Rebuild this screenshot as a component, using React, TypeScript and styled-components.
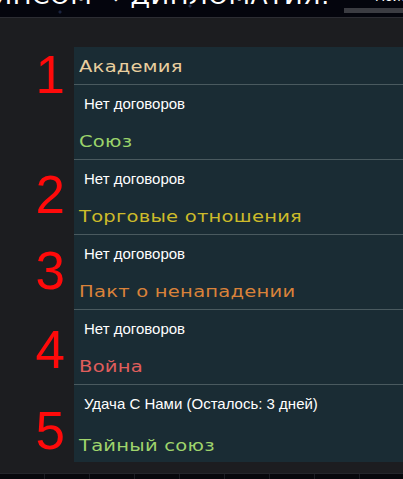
import React from "react";
import styled, { createGlobalStyle } from "styled-components";

const Global = createGlobalStyle`
  html, body { margin: 0; padding: 0; background: #1c1d20; }
  body { width: 403px; height: 479px; overflow: hidden; }
  * { box-sizing: border-box; }
`;

const Page = styled.div`
  width: 403px;
  height: 479px;
  display: flex;
  flex-direction: column;
  overflow: hidden;
  background: #1c1d20;
`;

const TopBar = styled.header`
  height: 18px;
  flex: none;
  display: flex;
  align-items: flex-start;
  background: radial-gradient(circle at 60px 12px, #1b2440 0 1px, transparent 2px),
    radial-gradient(circle at 190px 6px, #253050 0 1px, transparent 2px),
    #04050d;
  border-bottom: 1px solid #2c2d33;
  overflow: hidden;
`;

const TitleBox = styled.div`
  width: 330px;
  height: 17px;
  flex: none;
  display: flex;
  align-items: flex-start;
  justify-content: flex-end;
  overflow: hidden;
`;

const Title = styled.h1`
  margin: -16px 0 0;
  white-space: nowrap;
  font-family: "DejaVu Sans", sans-serif;
  font-weight: normal;
  font-size: 25px;
  line-height: 24px;
  color: #ffffff;
  letter-spacing: 0.5px;
`;

const Search = styled.div`
  flex: 1;
  align-self: stretch;
  margin-left: 14px;
  display: flex;
  flex-direction: column;
`;

const SearchLabel = styled.span`
  margin-left: 31px;
  margin-top: -11px;
  font-family: "Liberation Sans", sans-serif;
  font-size: 14px;
  line-height: 14px;
  color: #ffffff;
  white-space: nowrap;
`;

const SearchBar = styled.div`
  height: 5px;
  margin-top: 5px;
  background: #3b3c42;
`;

const Main = styled.main`
  flex: 1;
  position: relative;
  padding: 29px 0 0 74px;
`;

const Panel = styled.section`
  width: 329px;
  background: #1a2c34;
  display: flex;
  flex-direction: column;
`;

const Heading = styled.div<{ $color: string }>`
  font-family: "DejaVu Sans", sans-serif;
  font-size: 16px;
  line-height: 18px;
  color: ${(p) => p.$color};
  padding-left: 5px;
  white-space: nowrap;
`;

const HeadText = styled.span`
  display: inline-block;
  transform: scaleX(1.22);
  transform-origin: left center;
  letter-spacing: 0.2px;
`;

const PanelHead = styled.div`
  height: 37px;
  display: flex;
  align-items: center;
  padding-top: 3px;
`;

const Section = styled.div<{ $last?: boolean }>`
  border-top: 1px solid #4a5a5f;
  display: flex;
  flex-direction: column;
  padding: 11px 0 ${(p) => (p.$last ? 7 : 8)}px;
  gap: ${(p) => (p.$last ? 25 : 21)}px;
`;

const Entry = styled.div`
  font-family: "Liberation Sans", Arial, sans-serif;
  font-size: 15px;
  line-height: 16px;
  color: #ffffff;
  padding-left: 10px;
  white-space: nowrap;
`;

const Marker = styled.span<{ $top: number }>`
  position: absolute;
  left: 20px;
  width: 45px;
  top: ${(p) => p.$top}px;
  text-align: right;
  font-family: "Liberation Sans", Arial, sans-serif;
  font-size: 53px;
  line-height: 52px;
  color: #ff0a0a;
`;

const BottomStrip = styled.div`
  height: 6px;
  flex: none;
  background: repeating-linear-gradient(90deg, #07080c 0 44px, #1c1e24 44px 45px), #07080c;
  border-top: 1px solid #24262b;
`;

const sections = [
  { entry: "Нет договоров", title: "Союз", color: "#9bd46b" },
  { entry: "Нет договоров", title: "Торговые отношения", color: "#cdbb2a" },
  { entry: "Нет договоров", title: "Пакт о ненападении", color: "#d9823a" },
  { entry: "Нет договоров", title: "Война", color: "#e05e5c" },
  { entry: "Удача С Нами (Осталось: 3 дней)", title: "Тайный союз", color: "#9fd46c" },
];

const markers = [
  { n: "1", top: 31 },
  { n: "2", top: 151 },
  { n: "3", top: 227 },
  { n: "4", top: 306 },
  { n: "5", top: 387 },
];

export default function App() {
  return (
    <Page>
      <Global />
      <TopBar>
        <TitleBox>
          <Title>УПРАВЛЕНИЕ АЛЬЯНСОМ → ДИПЛОМАТИЯ:</Title>
        </TitleBox>
        <Search>
          <SearchLabel>Поиск</SearchLabel>
          <SearchBar />
        </Search>
      </TopBar>
      <Main>
        <Panel>
          <PanelHead>
            <Heading $color="#e9cf9f">
              <HeadText>Академия</HeadText>
            </Heading>
          </PanelHead>
          {sections.map((s, i) => (
            <Section key={s.title} $last={i === sections.length - 1}>
              <Entry>{s.entry}</Entry>
              <Heading $color={s.color}>
                <HeadText>{s.title}</HeadText>
              </Heading>
            </Section>
          ))}
        </Panel>
        {markers.map((m) => (
          <Marker key={m.n} $top={m.top}>
            {m.n}
          </Marker>
        ))}
      </Main>
      <BottomStrip />
    </Page>
  );
}
